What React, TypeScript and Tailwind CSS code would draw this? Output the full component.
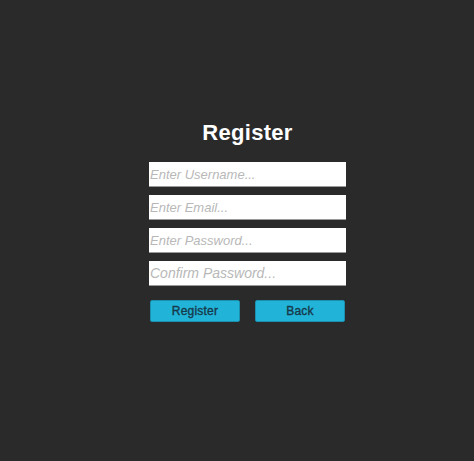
import React from "react";

// ---------- COMPONENT ----------
const fields = [
  { placeholder: "Enter Username...", type: "text", size: "text-[13px]" },
  { placeholder: "Enter Email...", type: "email", size: "text-[13px]" },
  { placeholder: "Enter Password...", type: "password", size: "text-[13px]" },
  { placeholder: "Confirm Password...", type: "password", size: "text-[14px]" },
];

const App = () => {
  return (
    <main
      className="w-full h-[461px] bg-[#2a2a2a] flex justify-center pl-[21px] pt-[118px]"
      style={{ fontFamily: '"Liberation Sans", Arial, sans-serif' }}
    >
      <div className="w-[197px] flex flex-col">
        {/* ---------- TITLE ---------- */}
        <h1 className="text-[22px] leading-[30px] font-bold text-white text-center tracking-[0.3px] mb-[14px]">
          Register
        </h1>

        {/* ---------- INPUTS ---------- */}
        <div className="flex flex-col gap-2">
          {fields.map((f) => (
            <input
              key={f.placeholder}
              type={f.type}
              placeholder={f.placeholder}
              className={`h-[25px] w-full bg-white px-px text-[#333] ${f.size} border-b border-[#9a9a9a] outline-none placeholder:italic placeholder:text-[#b8b8b8]`}
            />
          ))}
        </div>

        {/* ---------- BUTTONS ---------- */}
        <div className="flex justify-between px-px mt-[14px]">
          <button className="w-[90px] h-[22px] rounded-[2px] bg-[#21b4d8] border border-[#1a8fae] text-[12px] tracking-[0.2px] text-[#17384a] [-webkit-text-stroke:0.35px_#17384a]">
            Register
          </button>
          <button className="w-[90px] h-[22px] rounded-[2px] bg-[#21b4d8] border border-[#1a8fae] text-[12px] tracking-[0.2px] text-[#17384a] [-webkit-text-stroke:0.35px_#17384a]">
            Back
          </button>
        </div>
      </div>
    </main>
  );
};

export default App;
